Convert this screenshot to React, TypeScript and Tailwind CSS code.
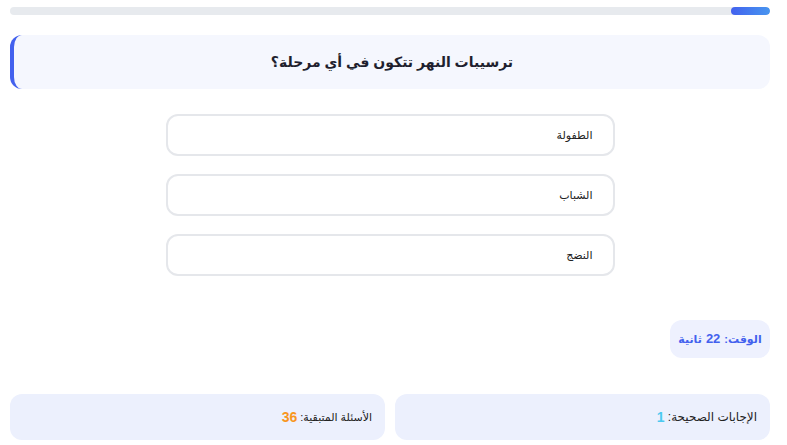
const options = ["الطفولة", "الشباب", "النضج"];

export default function App() {
  return (
    <div
      dir="rtl"
      className="w-[780px] h-[445px] bg-white px-[10px] pt-[7px] flex flex-col overflow-hidden"
      style={{ fontFamily: "'Liberation Sans', 'DejaVu Sans', sans-serif" }}
    >
      {/* Progress */}
      <div className="h-2 w-[760px] rounded-full bg-[#e7eaee] flex overflow-hidden">
        <div className="h-full w-[39px] rounded-full bg-gradient-to-l from-[#4895ef] to-[#4361ee]" />
      </div>

      {/* Question */}
      <div className="mt-5 w-[760px] rounded-xl border-l-4 border-[#4361ee] bg-[#f5f7fe] py-[15px] text-center">
        <h2 className="text-[14px] leading-6 font-bold text-[#1f1f2e]">ترسيبات النهر تتكون في أي مرحلة؟</h2>
      </div>

      {/* Options */}
      <div className="mt-[25px] flex flex-col items-center gap-[18px]">
        {options.map((o) => (
          <button
            key={o}
            className="w-[449px] h-[42px] rounded-xl border-2 border-[#e5e7eb] bg-white pr-5 text-right text-[11px] text-[#222]"
          >
            {o}
          </button>
        ))}
      </div>

      {/* Timer */}
      <div className="mt-[44px] flex">
        <div className="h-[38px] w-[100px] rounded-xl bg-[#eef1fe] flex items-center justify-center text-[11px] font-bold text-[#4361ee]">
          الوقت: <span className="text-[13px] mx-1">22</span> ثانية
        </div>
      </div>

      {/* Stats */}
      <div className="mt-9 grid grid-cols-2 gap-[10px] w-[760px]">
        <div className="h-[46px] rounded-xl bg-[#ecf0fd] px-[13px] flex items-center text-xs text-[#222]">
          الإجابات الصحيحة:&nbsp;<span className="text-sm font-bold text-[#4cc9f0]">1</span>
        </div>
        <div className="h-[46px] rounded-xl bg-[#ecf0fd] px-[13px] flex items-center text-[11px] text-[#222]">
          الأسئلة المتبقية:&nbsp;<span className="text-sm font-bold text-[#f8961e]">36</span>
        </div>
      </div>
    </div>
  );
}
